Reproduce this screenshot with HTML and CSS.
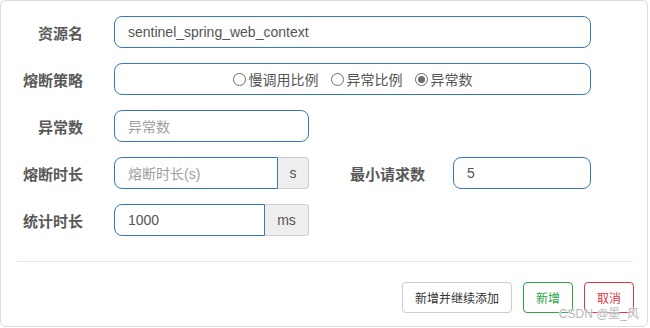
FILE: index.html
```html
<!DOCTYPE html>
<html>
<head>
<meta charset="utf-8">
<link rel="stylesheet" href="styles.css">
</head>
<body>
<div class="card">
  <div class="form">
    <div class="row">
      <label class="label">资源名</label>
      <div class="input w-full">sentinel_spring_web_context</div>
    </div>
    <div class="row">
      <label class="label">熔断策略</label>
      <div class="input w-full radios">
        <span class="radio"><span class="dot"></span>慢调用比例</span>
        <span class="radio"><span class="dot"></span>异常比例</span>
        <span class="radio"><span class="dot checked"></span>异常数</span>
      </div>
    </div>
    <div class="row">
      <label class="label">异常数</label>
      <div class="input w-half placeholder">异常数</div>
    </div>
    <div class="row">
      <label class="label">熔断时长</label>
      <div class="group">
        <div class="input placeholder">熔断时长(s)</div>
        <div class="addon addon-s">s</div>
      </div>
      <label class="label label-2">最小请求数</label>
      <div class="input w-small">5</div>
    </div>
    <div class="row">
      <label class="label">统计时长</label>
      <div class="group">
        <div class="input">1000</div>
        <div class="addon addon-ms">ms</div>
      </div>
    </div>
  </div>
  <div class="divider"></div>
  <div class="footer">
    <button class="btn btn-default">新增并继续添加</button>
    <button class="btn btn-green">新增</button>
    <button class="btn btn-red">取消</button>
  </div>
  <div class="watermark">CSDN @墨_风</div>
</div>
</body>
</html>
```
FILE: styles.css
```css
html, body {
  margin: 0;
  padding: 0;
  background: #fff;
}
body {
  font-family: "Liberation Sans", "Noto Sans CJK SC", sans-serif;
}
.card {
  position: relative;
  box-sizing: border-box;
  width: 648px;
  height: 327px;
  border: 1px solid #dcdcdc;
  border-radius: 6px;
  padding-top: 15px;
}
.row {
  display: flex;
  align-items: center;
  height: 32px;
  margin-bottom: 15px;
}
.label {
  flex: none;
  width: 82px;
  margin-right: 31px;
  text-align: right;
  font-weight: bold;
  font-size: 15px;
  color: #595959;
}
.label-2 {
  width: 116px;
  margin-right: 28px;
}
.input {
  box-sizing: border-box;
  height: 32px;
  border: 1px solid #3a78b5;
  border-radius: 8px;
  padding: 0 13px;
  font-size: 14px;
  color: #555;
  display: flex;
  align-items: center;
  background: #fff;
}
.placeholder {
  color: #a0a0a0;
}
.w-full { width: 477px; }
.w-half { width: 195px; }
.w-small { width: 138px; }
.radios {
  justify-content: center;
  gap: 12px;
}
.radio {
  display: inline-flex;
  align-items: center;
}
.dot {
  box-sizing: border-box;
  width: 13px;
  height: 13px;
  border: 1px solid #6b6b6b;
  border-radius: 50%;
  margin-right: 3px;
  position: relative;
}
.dot.checked::after {
  content: "";
  position: absolute;
  left: 2px;
  top: 2px;
  width: 7px;
  height: 7px;
  border-radius: 50%;
  background: #6b6b6b;
}
.group {
  display: flex;
  width: 195px;
}
.group .input {
  flex: 1;
  border-radius: 8px 0 0 8px;
}
.addon {
  box-sizing: border-box;
  height: 32px;
  border: 1px solid #ccc;
  border-left: 0;
  background: #eee;
  border-radius: 0 4px 4px 0;
  display: flex;
  align-items: center;
  justify-content: center;
  font-size: 14px;
  color: #555;
}
.addon-s { width: 31px; }
.addon-ms { width: 44px; }
.divider {
  margin: 25px 14px 0 16px;
  border-top: 1px solid #e5e5e5;
}
.footer {
  display: flex;
  justify-content: flex-end;
  gap: 11px;
  margin-top: 20px;
  padding-right: 13px;
}
.btn {
  box-sizing: border-box;
  height: 31px;
  padding: 0 12px;
  font-family: "Liberation Sans", "Noto Sans CJK SC", sans-serif;
  font-size: 12px;
  background: #fff;
  border-radius: 4px;
  border: 1px solid #ccc;
  color: #333;
}
.btn-green {
  border-color: #28a745;
  color: #28a745;
}
.btn-red {
  border-color: #dc3545;
  color: #dc3545;
}
.watermark {
  position: absolute;
  right: 8px;
  bottom: 5px;
  font-size: 12px;
  color: #b8b8b8;
  text-shadow: 0 0 2px #fff, 0 0 2px #fff;
}
```
